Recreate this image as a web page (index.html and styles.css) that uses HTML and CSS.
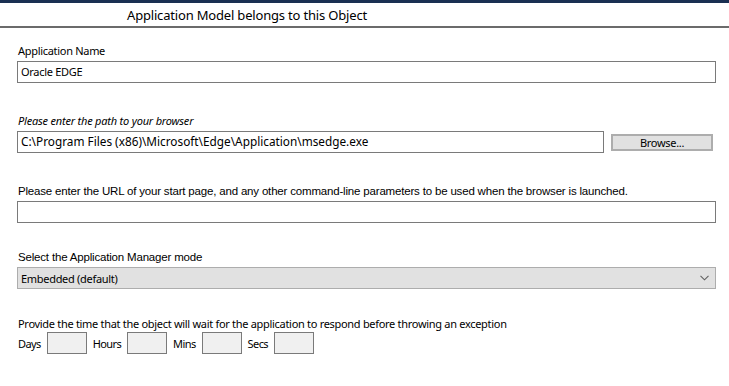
FILE: index.html
```html
<!DOCTYPE html>
<html>
<head>
<meta charset="utf-8">
<link rel="stylesheet" href="styles.css">
</head>
<body>
<div class="topbar"></div>
<div class="header"><span class="title">Application Model belongs to this Object</span></div>
<div class="form">
  <div class="field f-name">
    <div class="label">Application Name</div>
    <div class="input">Oracle EDGE</div>
  </div>
  <div class="field f-path">
    <div class="label italic">Please enter the path to your browser</div>
    <div class="row">
      <div class="input path">C:\Program Files (x86)\Microsoft\Edge\Application\msedge.exe</div>
      <div class="button">Browse...</div>
    </div>
  </div>
  <div class="field f-url">
    <div class="label narrow">Please enter the URL of your start page, and any other command-line parameters to be used when the browser is launched.</div>
    <div class="input"></div>
  </div>
  <div class="field f-mode">
    <div class="label narrow">Select the Application Manager mode</div>
    <div class="select"><span>Embedded (default)</span>
      <svg class="chev" width="9" height="6" viewBox="0 0 9 6"><path d="M0.5 0.8 L4.5 4.8 L8.5 0.8" fill="none" stroke="#606060" stroke-width="1.1"/></svg>
    </div>
  </div>
  <div class="field f-time">
    <div class="label">Provide the time that the object will wait for the application to respond before throwing an exception</div>
    <div class="timerow">
      <span class="tl">Days</span><span class="tbox"></span>
      <span class="tl">Hours</span><span class="tbox"></span>
      <span class="tl">Mins</span><span class="tbox"></span>
      <span class="tl">Secs</span><span class="tbox"></span>
    </div>
  </div>
</div>
</body>
</html>
```
FILE: styles.css
```css
html, body {
  margin: 0;
  padding: 0;
  background: #ffffff;
}
body {
  width: 729px;
  height: 386px;
  overflow: hidden;
  font-family: "Noto Sans", "DejaVu Sans", sans-serif;
  font-size: 11px;
  letter-spacing: -0.3px;
  color: #000;
}
.topbar {
  height: 3px;
  background: #1a3052;
}
.header {
  height: 23px;
  border-bottom: 2px solid #6b6b6b;
  padding-left: 127px;
  display: flex;
  align-items: center;
}
.title {
  font-size: 13px;
  line-height: 16px;
  letter-spacing: -0.18px;
}
.form {
  padding-left: 17px;
  padding-right: 13px;
}
.field .label {
  padding-left: 1px;
  line-height: 14px;
  height: 14px;
  margin-bottom: 3px;
}
.label.italic {
  font-style: italic;
  letter-spacing: -0.2px;
}
.label.narrow {
  font-family: "Liberation Sans", Arial, sans-serif;
  letter-spacing: -0.18px;
  font-size: 11.5px;
}
.input {
  box-sizing: border-box;
  height: 22px;
  border: 1px solid #7a7a7a;
  padding-left: 3px;
  line-height: 19px;
  background: #fff;
}
.f-name { margin-top: 16px; }
.f-path { margin-top: 31px; }
.f-url { margin-top: 31px; }
.f-mode { margin-top: 27px; }
.f-time { margin-top: 28px; }
.row {
  display: flex;
  align-items: center;
  gap: 7px;
}
.input.path {
  width: 587px;
  font-size: 11.8px;
  letter-spacing: 0;
}
.button {
  box-sizing: border-box;
  width: 102px;
  height: 17px;
  border: 2px solid #adadad;
  background: #e1e1e1;
  text-align: center;
  line-height: 13px;
}
.select {
  box-sizing: border-box;
  height: 22px;
  border: 1px solid #adadad;
  background: #e1e1e1;
  padding-left: 3px;
  padding-right: 6px;
  display: flex;
  align-items: center;
  justify-content: space-between;
}
.timerow {
  display: flex;
  align-items: center;
  padding-left: 1px;
  margin-top: -2px;
}
.tl {
  margin-right: 6px;
  letter-spacing: -0.6px;
}
.tbox {
  box-sizing: border-box;
  width: 40px;
  height: 22px;
  border: 1px solid #7a7a7a;
  background: #f0f0f0;
  margin-right: 6px;
}
```
